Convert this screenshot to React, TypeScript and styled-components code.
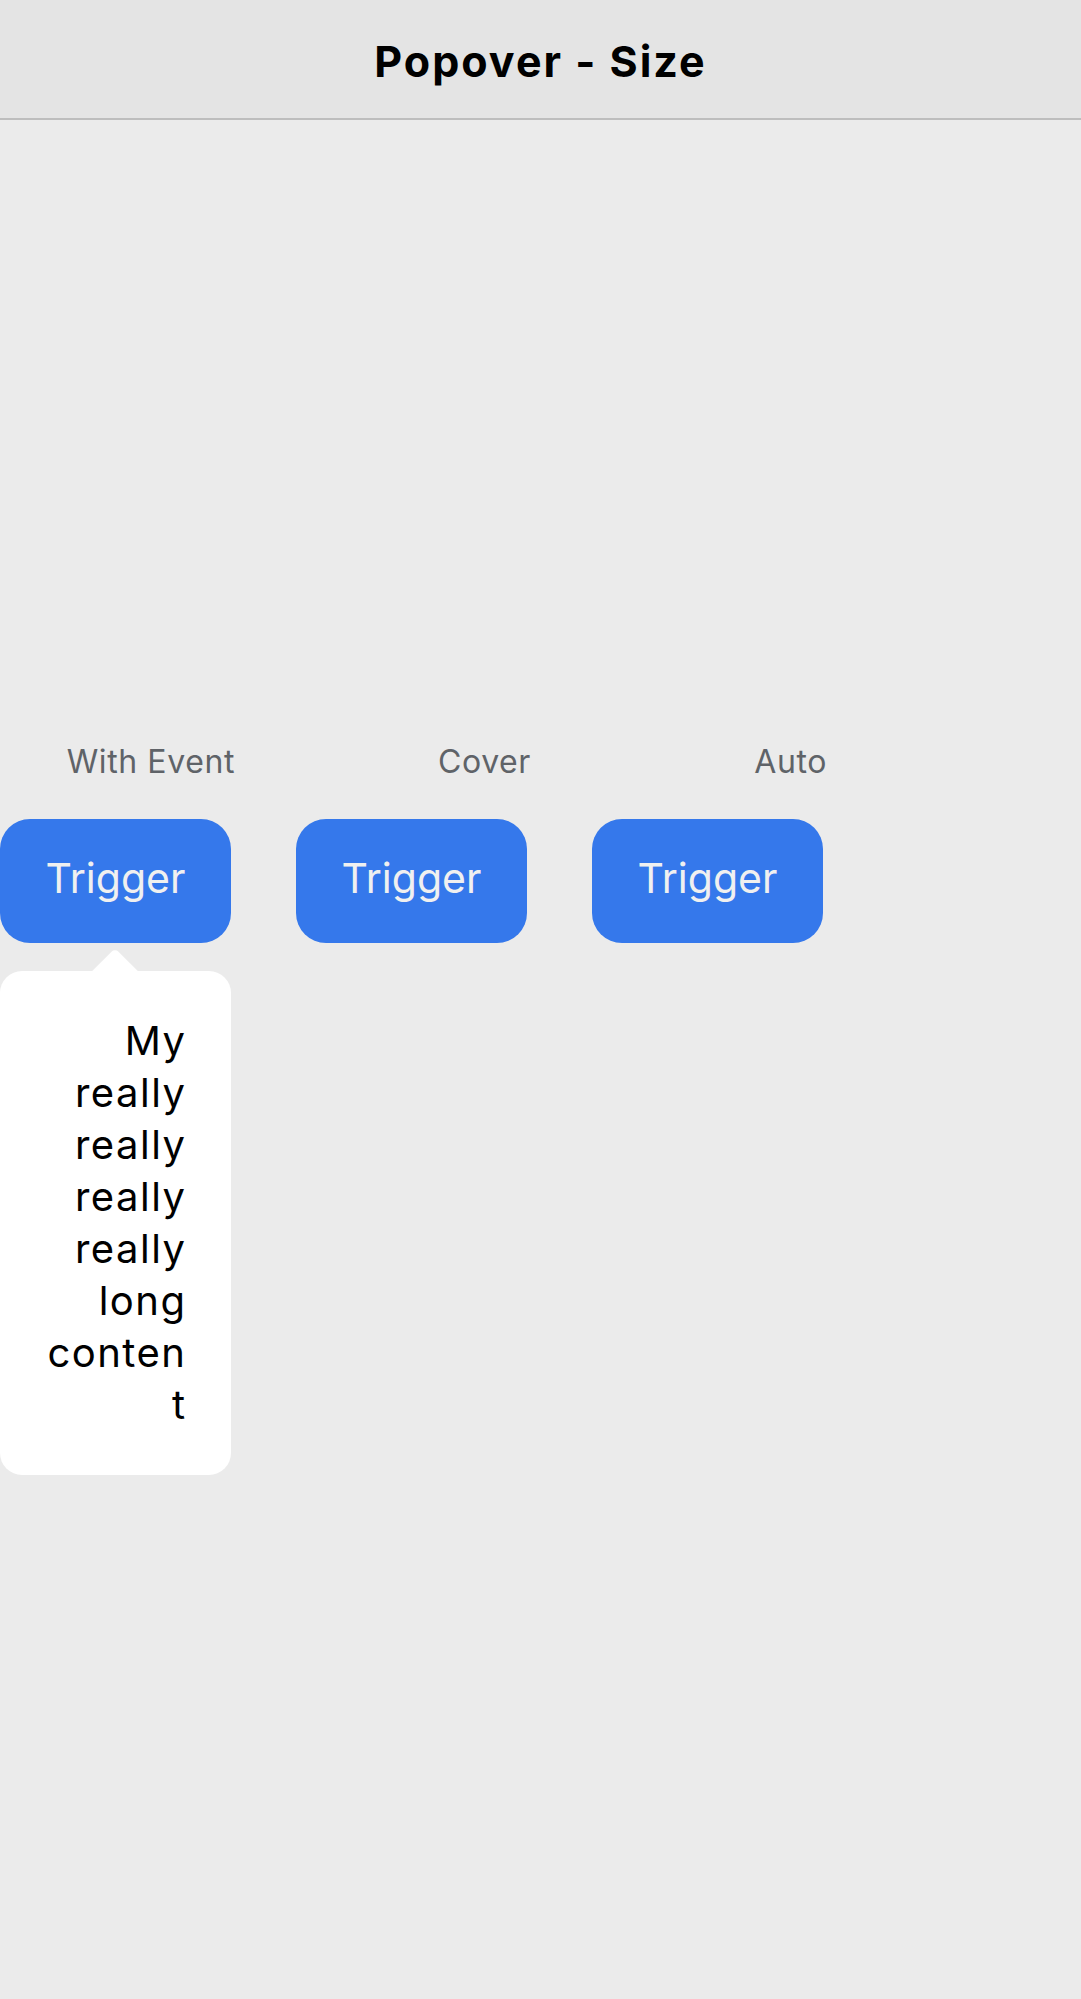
import React from "react";
import styled, { createGlobalStyle } from "styled-components";

const Global = createGlobalStyle`
  html, body { margin: 0; padding: 0; background: #ebebeb; }
  body { font-family: Inter, "Noto Sans", sans-serif; -webkit-font-smoothing: antialiased; }
  * { box-sizing: border-box; }
`;

const Page = styled.div`
  min-height: 1999px;
  background: #ebebeb;
  overflow: hidden;
`;

const Header = styled.header`
  height: 120px;
  background: #e4e4e4;
  border-bottom: 2px solid #bdbdbd;
  display: flex;
  align-items: center;
  justify-content: center;
  padding-top: 4px;
`;

const Title = styled.h1`
  margin: 0;
  font-family: Inter, sans-serif;
  font-weight: 700;
  font-size: 43px;
  color: #000;
  letter-spacing: 2px;
`;

const Main = styled.main`
  padding-top: 622px;
`;

const Row = styled.div`
  display: flex;
  gap: 65px;
`;

const Column = styled.div`
  position: relative;
  width: 231px;
  display: flex;
  flex-direction: column;
  align-items: flex-end;
`;

const Label = styled.div`
  font-size: 32px;
  line-height: 40px;
  color: #5f6368;
  letter-spacing: 0.6px;
  margin-right: -4px;
  margin-bottom: 37px;
  white-space: nowrap;
`;

const Button = styled.button`
  width: 231px;
  height: 124px;
  border: none;
  border-radius: 30px;
  background: #3578eb;
  color: #f0f0f0;
  font-family: Inter, sans-serif;
  font-size: 41px;
  font-weight: 400;
  padding: 0 0 6px;
  cursor: pointer;
`;

const Popover = styled.div`
  position: absolute;
  left: 0;
  top: 229px;
  width: 231px;
  background: #fff;
  border-radius: 22px;
  padding: 44px 46px 44px 30px;
  text-align: right;
  font-size: 40px;
  line-height: 52px;
  letter-spacing: 1.5px;
  color: #000;
  overflow-wrap: anywhere;
  word-break: break-word;
`;

const Arrow = styled.div`
  position: absolute;
  left: 115px;
  top: -16.5px;
  width: 33px;
  height: 33px;
  background: #fff;
  border-radius: 5px 0 0 0;
  transform: translateX(-50%) rotate(45deg);
  transform-origin: center;
  z-index: 0;
`;

const PopText = styled.div`
  position: relative;
  z-index: 1;
  width: 148px;
  margin-left: auto;
  margin-right: -1.5px;
`;

const columns = [
  { label: "With Event", open: true },
  { label: "Cover", open: false },
  { label: "Auto", open: false },
];

export default function App() {
  return (
    <Page>
      <Global />
      <Header>
        <Title>Popover - Size</Title>
      </Header>
      <Main>
        <Row>
          {columns.map((c) => (
            <Column key={c.label}>
              <Label>{c.label}</Label>
              <Button>Trigger</Button>
              {c.open && (
                <Popover>
                  <Arrow />
                  <PopText>My really really really really long content</PopText>
                </Popover>
              )}
            </Column>
          ))}
        </Row>
      </Main>
    </Page>
  );
}
